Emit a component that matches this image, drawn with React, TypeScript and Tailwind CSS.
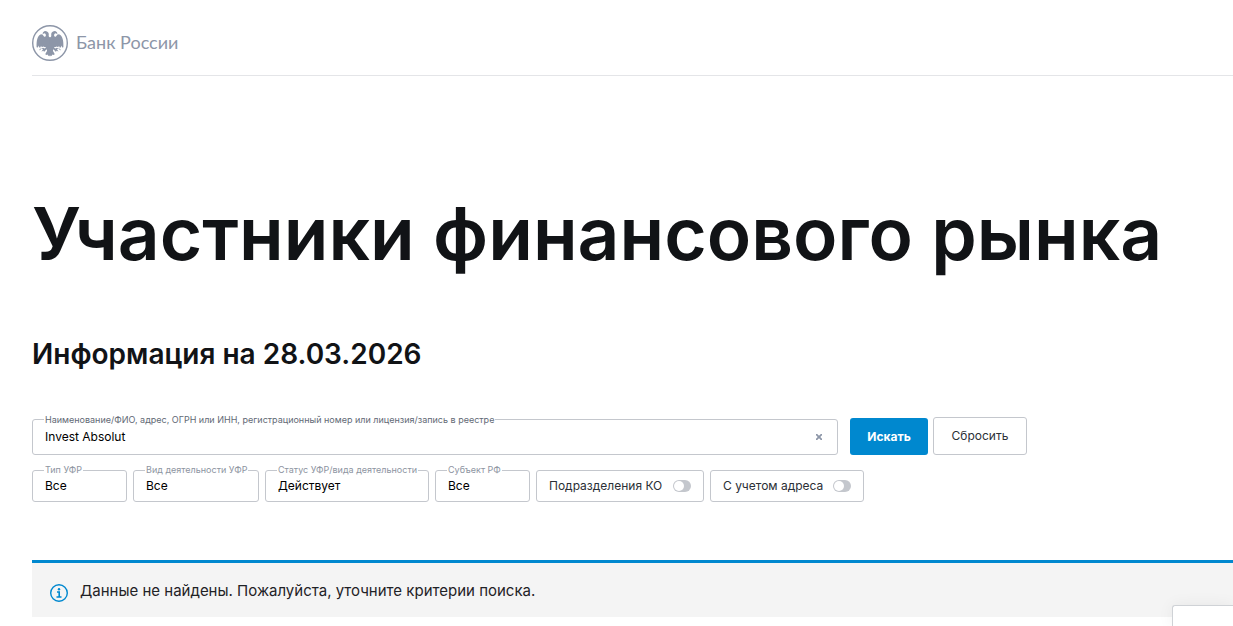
import React, { useState } from "react";
import { X } from "lucide-react";

const FILTERS = [
  { id: "type", label: "Тип УФР", value: "Все", className: "w-[95px]" },
  { id: "activity", label: "Вид деятельности УФР", value: "Все", className: "w-[126px]" },
  { id: "status", label: "Статус УФР/вида деятельности", value: "Действует", className: "w-[164px]" },
  { id: "region", label: "Субъект РФ", value: "Все", className: "w-[95px]" },
];

export default function App() {
  const [query, setQuery] = useState("Invest Absolut");

  return (
    <div className="bg-white pl-8 font-['Inter',sans-serif] text-[#111316]">
      {/* Header */}
      <header className="flex h-[76px] items-center border-b border-[#e4e5e8] pt-2.5">
        <a href="#" className="flex items-center gap-2 text-[#8d96a8]">
          <Emblem />
          <span className="pb-0.5 font-['Lato',sans-serif] text-[18px] leading-6">Банк России</span>
        </a>
      </header>

      <main className="pt-[114px]">
        <h1 className="text-[73px] leading-[88px] font-semibold whitespace-nowrap">
          Участники финансового рынка
        </h1>
        <h2 className="mt-[58px] text-[28px] leading-9 font-semibold">Информация на 28.03.2026</h2>

        <form className="mt-[45px]" onSubmit={(e) => e.preventDefault()}>
          {/* Search row */}
          <div className="flex max-w-[995px] items-end">
            <div className="relative flex h-9 flex-1 items-center rounded-[3px] border border-[#c4c7cd] pr-[15px] pl-3">
              <FieldLabel
                id="query"
                text="Наименование/ФИО, адрес, ОГРН или ИНН, регистрационный номер или лицензия/запись в реестре"
                className="-top-1.5 text-[#626975]"
              />
              <input
                id="query"
                value={query}
                onChange={(e) => setQuery(e.target.value)}
                className="min-w-0 flex-1 bg-transparent text-xs text-black outline-none"
              />
              <button type="button" aria-label="Очистить" onClick={() => setQuery("")} className="text-[#8d96a8]">
                <X className="h-1.5 w-1.5" viewBox="5 5 14 14" strokeWidth={4} />
              </button>
            </div>
            <button type="submit" className="ml-3 h-[37px] w-[78px] rounded-[3px] bg-[#0088cf] text-xs font-bold text-white">
              Искать
            </button>
            <button
              type="reset"
              onClick={() => setQuery("")}
              className="ml-[5px] h-[38px] w-[94px] rounded-[3px] border border-[#c4c7cd] text-xs text-[#2b2f36]"
            >
              Сбросить
            </button>
          </div>

          {/* Filters */}
          <div className="mt-[15px] flex flex-wrap gap-1.5">
            {FILTERS.map((f) => (
              <div key={f.id} className={`relative h-8 rounded-[3px] border border-[#c4c7cd] ${f.className}`}>
                <FieldLabel id={f.id} text={f.label} className="-top-[7px] text-[#8d94a1]" />
                <select id={f.id} className="h-full w-full appearance-none bg-transparent px-3 text-xs text-black outline-none">
                  <option>{f.value}</option>
                </select>
              </div>
            ))}
            <Toggle label="Подразделения КО" className="w-[168px]" />
            <Toggle label="С учетом адреса" className="w-[154px]" />
          </div>
        </form>

        {/* Empty result */}
        <div className="mt-[58px] flex h-[57px] items-center gap-3 border-t-[3px] border-[#0088cf] bg-[#f4f4f4] pt-0.5 pl-[18px]">
          <InfoIcon />
          <p className="text-[15px] leading-5 text-[#1f2226]">
            Данные не найдены. Пожалуйста, уточните критерии поиска.
          </p>
        </div>
      </main>

      {/* Corner widget */}
      <div className="fixed right-0 bottom-0 h-[21px] w-[61px] rounded-tl-[3px] border-t border-l border-[#cfd2d6] bg-white shadow-[0_0_16px_rgba(0,0,0,0.06)]" />
    </div>
  );
}

function FieldLabel({ id, text, className }: { id: string; text: string; className: string }) {
  return (
    <label
      htmlFor={id}
      className={`absolute left-[11px] bg-white px-px text-[9px] leading-3 whitespace-nowrap ${className}`}
    >
      {text}
    </label>
  );
}

function Toggle({ label, className }: { label: string; className: string }) {
  return (
    <label
      className={`flex h-8 items-center justify-between rounded-[3px] border border-[#c4c7cd] px-3 text-xs whitespace-nowrap text-[#2b2f36] ${className}`}
    >
      {label}
      <input type="checkbox" className="peer sr-only" />
      <span className="flex h-3 w-[18px] shrink-0 items-center rounded-full bg-[#c4c7cd] px-px peer-checked:justify-end peer-checked:bg-[#0088cf]">
        <span className="h-2.5 w-2.5 rounded-full bg-white" />
      </span>
    </label>
  );
}

function InfoIcon() {
  return (
    <svg viewBox="0 0 18 18" className="mt-1 h-[18px] w-[18px]" fill="none" stroke="#0088cf" aria-hidden="true">
      <circle cx="9" cy="9" r="8.3" strokeWidth="1.4" />
      <path d="M7 8h2.2v5M6.5 13h5" strokeWidth="1.6" />
      <circle cx="9" cy="5.3" r="1.2" fill="#0088cf" stroke="none" />
    </svg>
  );
}

// Two-headed eagle: one half is drawn and mirrored around the centre line
function Emblem() {
  const half =
    "M18.1 12.6 17 11.8C16.4 11 17 10 16.7 8.6 16.3 6.9 14.6 6 12.8 6.1L11 7.2 10.6 8.9 12.8 8.3C14 9.2 14.2 10.6 13.5 11.6 12.6 12 11.8 11.4 11.3 10.4L10.2 9.2 8.4 9.6C5.4 11.4 4.4 15.4 4.6 22.2L5.8 22.4 6.6 20.6 7.2 22.6 8.4 22.4 9 20.8 9.8 22.2 11.2 21.4 12.6 22 14.2 22.2 12.8 23.6 11 22.8 9.8 23.4 11 24.5 9.4 26.6 11.6 25.8 12 27 13.6 25.2 15 24.2 15 26 13.2 29.2 14.6 29.9 15.7 29.5 16.4 31 17.3 30.4 18.1 31.4Z";
  return (
    <svg viewBox="0 0 36 36" className="h-9 w-9" fill="currentColor" aria-hidden="true">
      <circle cx="18" cy="18" r="17.3" fill="none" stroke="currentColor" strokeWidth="1.4" />
      <path d={half} />
      <path d={half} transform="matrix(-1 0 0 1 36 0)" />
      <path d="M9.4 23.6 7.4 24.8M26.6 23.6 28.6 24.8" stroke="currentColor" strokeWidth="0.9" />
    </svg>
  );
}
